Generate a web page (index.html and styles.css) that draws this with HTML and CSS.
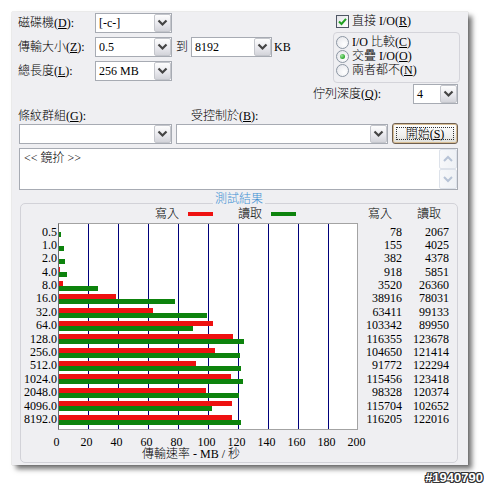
FILE: index.html
```html
<!DOCTYPE html>
<html>
<head>
<meta charset="utf-8">
<link rel="stylesheet" href="styles.css">
</head>
<body>
<div class="win">
  <div class="top">
    <div class="fields">
      <div class="frow">
        <span class="flabel">磁碟機(<u>D</u>):</span>
        <div class="sel w77"><span class="val">[-c-]</span><span class="dd"><svg width="15" height="14" viewBox="0 0 15 14"><path d="M3.5 4.5 L7.5 8.5 L11.5 4.5" fill="none" stroke="#444" stroke-width="2.2"/></svg></span></div>
      </div>
      <div class="frow">
        <span class="flabel">傳輸大小(<u>Z</u>):</span>
        <div class="sel w77"><span class="val">0.5</span><span class="dd"><svg width="15" height="14" viewBox="0 0 15 14"><path d="M3.5 4.5 L7.5 8.5 L11.5 4.5" fill="none" stroke="#444" stroke-width="2.2"/></svg></span></div>
        <span class="to">到</span>
        <div class="sel w81"><span class="val">8192</span><span class="dd"><svg width="15" height="14" viewBox="0 0 15 14"><path d="M3.5 4.5 L7.5 8.5 L11.5 4.5" fill="none" stroke="#444" stroke-width="2.2"/></svg></span></div>
        <span class="kb">KB</span>
      </div>
      <div class="frow">
        <span class="flabel">總長度(<u>L</u>):</span>
        <div class="sel w77"><span class="val">256 MB</span><span class="dd"><svg width="15" height="14" viewBox="0 0 15 14"><path d="M3.5 4.5 L7.5 8.5 L11.5 4.5" fill="none" stroke="#444" stroke-width="2.2"/></svg></span></div>
      </div>
    </div>
    <div class="opts">
      <div class="chkrow">
        <span class="chk"><svg width="11" height="11" viewBox="0 0 11 11"><path d="M2 5.5 L4.5 8 L9 2.8" fill="none" stroke="#21a121" stroke-width="2"/></svg></span>
        <span class="otext">直接 I/O(<u>R</u>)</span>
      </div>
      <div class="rbox">
        <div class="rrow"><span class="radio"></span><span class="otext">I/O 比較(<u>C</u>)</span></div>
        <div class="rrow"><span class="radio on"><span class="dot"></span></span><span class="otext">交疊 I/O(<u>O</u>)</span></div>
        <div class="rrow"><span class="radio"></span><span class="otext">兩者都不(<u>N</u>)</span></div>
      </div>
    </div>
  </div>
  <div class="qrow">
    <span class="qlabel">佇列深度(<u>Q</u>):</span>
    <div class="sel w45"><span class="val">4</span><span class="dd"><svg width="15" height="14" viewBox="0 0 15 14"><path d="M3.5 4.5 L7.5 8.5 L11.5 4.5" fill="none" stroke="#444" stroke-width="2.2"/></svg></span></div>
  </div>
  <div class="lrow">
    <span class="l1">條紋群組(<u>G</u>):</span>
    <span class="l2">受控制於(<u>B</u>):</span>
  </div>
  <div class="crow">
    <div class="sel combo w153"><span class="val"></span><span class="dd"><svg width="15" height="14" viewBox="0 0 15 14"><path d="M3.5 4.5 L7.5 8.5 L11.5 4.5" fill="none" stroke="#444" stroke-width="2.2"/></svg></span></div>
    <div class="sel combo w212"><span class="val"></span><span class="dd"><svg width="15" height="14" viewBox="0 0 15 14"><path d="M3.5 4.5 L7.5 8.5 L11.5 4.5" fill="none" stroke="#444" stroke-width="2.2"/></svg></span></div>
    <div class="btn"><span class="focus">開始(<u>S</u>)</span></div>
  </div>
  <div class="memo">
    <div class="mtext">&lt;&lt; 鏡扴 &gt;&gt;</div>
    <div class="sb">
      <span class="sbb"><svg width="12" height="10" viewBox="0 0 12 10"><path d="M2 7 L6 3 L10 7" fill="none" stroke="#b7c3d6" stroke-width="2"/></svg></span>
      <span class="sbb"><svg width="12" height="10" viewBox="0 0 12 10"><path d="M2 3 L6 7 L10 3" fill="none" stroke="#b7c3d6" stroke-width="2"/></svg></span>
    </div>
  </div>
  <div class="group">
    <div class="gtitle">測試結果</div>
    <div class="legend">
      <span class="lg1">寫入</span><span class="lw"></span>
      <span class="lg2">讀取</span><span class="lr"></span>
      <span class="lg3">寫入</span>
      <span class="lg4">讀取</span>
    </div>
    <div class="chart">
      <div class="ylab">
        <div class="r">0.5</div><div class="r">1.0</div><div class="r">2.0</div><div class="r">4.0</div><div class="r">8.0</div>
        <div class="r">16.0</div><div class="r">32.0</div><div class="r">64.0</div><div class="r">128.0</div><div class="r">256.0</div>
        <div class="r">512.0</div><div class="r">1024.0</div><div class="r">2048.0</div><div class="r">4096.0</div><div class="r">8192.0</div>
      </div>
      <div class="plot">
        <div class="br"><span class="bw" style="width:0px"></span><span class="brd" style="width:2.1px"></span></div>
        <div class="br"><span class="bw" style="width:0px"></span><span class="brd" style="width:5px"></span></div>
        <div class="br"><span class="bw" style="width:0px"></span><span class="brd" style="width:5.6px"></span></div>
        <div class="br"><span class="bw" style="width:0.4px"></span><span class="brd" style="width:7.8px"></span></div>
        <div class="br"><span class="bw" style="width:4.3px"></span><span class="brd" style="width:38.5px"></span></div>
        <div class="br"><span class="bw" style="width:57.4px"></span><span class="brd" style="width:116px"></span></div>
        <div class="br"><span class="bw" style="width:94.1px"></span><span class="brd" style="width:147.7px"></span></div>
        <div class="br"><span class="bw" style="width:154px"></span><span class="brd" style="width:133.9px"></span></div>
        <div class="br"><span class="bw" style="width:173.5px"></span><span class="brd" style="width:184.5px"></span></div>
        <div class="br"><span class="bw" style="width:156px"></span><span class="brd" style="width:181.1px"></span></div>
        <div class="br"><span class="bw" style="width:136.7px"></span><span class="brd" style="width:182.4px"></span></div>
        <div class="br"><span class="bw" style="width:172.2px"></span><span class="brd" style="width:184.1px"></span></div>
        <div class="br"><span class="bw" style="width:146.5px"></span><span class="brd" style="width:179.6px"></span></div>
        <div class="br"><span class="bw" style="width:172.6px"></span><span class="brd" style="width:153px"></span></div>
        <div class="br"><span class="bw" style="width:173.3px"></span><span class="brd" style="width:182px"></span></div>
      </div>
      <div class="vcol c1">
        <div class="r">78</div><div class="r">155</div><div class="r">382</div><div class="r">918</div><div class="r">3520</div>
        <div class="r">38916</div><div class="r">63411</div><div class="r">103342</div><div class="r">116355</div><div class="r">104650</div>
        <div class="r">91772</div><div class="r">115456</div><div class="r">98328</div><div class="r">115704</div><div class="r">116205</div>
      </div>
      <div class="vcol c2">
        <div class="r">2067</div><div class="r">4025</div><div class="r">4378</div><div class="r">5851</div><div class="r">26360</div>
        <div class="r">78031</div><div class="r">99133</div><div class="r">89950</div><div class="r">123678</div><div class="r">121414</div>
        <div class="r">122294</div><div class="r">123418</div><div class="r">120374</div><div class="r">102652</div><div class="r">122016</div>
      </div>
    </div>
    <div class="xlab">
      <span>0</span><span>20</span><span>40</span><span>60</span><span>80</span><span>100</span><span>120</span><span>140</span><span>160</span><span>180</span><span>200</span>
    </div>
    <div class="xtitle">傳輸速率 - MB / 秒</div>
  </div>
</div>
<div class="wm">#1940790</div>
</body>
</html>
```

FILE: styles.css
```css
* { box-sizing: border-box; }
html, body { margin: 0; padding: 0; background: #fff; }
body {
  width: 488px; height: 486px; overflow: hidden;
  font-family: "Liberation Serif", "Noto Sans CJK TC", serif;
  font-size: 12px; font-weight: 300; color: #000;
}
u { text-decoration: underline; text-underline-offset: 1px; }
.win {
  margin: 12px 0 0 12px; width: 456px; height: 453px;
  background: #efeff2; padding: 1px 10px 0 6px;
  box-shadow: 0 0 1px rgba(0,0,0,.35), 4px 4px 5px rgba(0,0,0,.55);
}
.top { display: flex; height: 71px; }
.fields { display: flex; flex-direction: column; gap: 4px; }
.frow { display: flex; align-items: center; height: 20px; }
.flabel { width: 77px; line-height: 14px; white-space: nowrap; }
.to { margin: 0 3px 0 4px; line-height: 14px; }
.kb { margin-left: 2px; line-height: 14px; }

.sel {
  display: flex; height: 20px; background: #fff;
  border: 1px solid #a7abb3;
}
.sel .val { flex: 1; padding-left: 3px; line-height: 18px; white-space: nowrap; overflow: hidden; }
.sel .dd {
  width: 17px; margin: 0; border: 1px solid #c4c6cc; border-radius: 2px;
  background: linear-gradient(#fdfdfd, #e9e9ee 55%, #d3d4da);
  display: flex; align-items: center; justify-content: center;
}
.w77 { width: 77px; }
.w81 { width: 81px; }
.w45 { width: 45px; }
.w153 { width: 153px; }
.w212 { width: 212px; }

.opts { margin-left: auto; margin-right: -2px; width: 127px; }
.chkrow { display: flex; align-items: center; height: 16px; }
.chk {
  width: 13px; height: 13px; margin-left: 3px;
  border: 1px solid #4f5664; background: linear-gradient(135deg, #e4e4e8, #fff);
  display: flex; align-items: center; justify-content: center;
}
.otext { margin-left: 3px; line-height: 14px; white-space: nowrap; }
.rbox {
  margin-top: 3px; height: 51px; border: 1px solid #d4d4da; border-radius: 4px;
  padding: 2px 0 0 2px;
}
.rrow { display: flex; align-items: center; height: 14px; }
.radio {
  width: 13px; height: 13px; border-radius: 50%;
  border: 1px solid #8c96a3; background: radial-gradient(circle at 65% 65%, #fff, #e2e3e8);
  display: flex; align-items: center; justify-content: center;
}
.radio .dot {
  width: 5px; height: 5px; border-radius: 50%;
  background: radial-gradient(circle at 35% 35%, #9be79b, #2da62d 70%);
}

.qrow { display: flex; justify-content: flex-end; align-items: center; height: 20px; }
.qlabel { width: 100px; line-height: 14px; white-space: nowrap; }

.lrow { display: flex; margin-top: 5px; line-height: 14px; }
.l1 { width: 173px; }

.crow { display: flex; align-items: flex-start; height: 21px; gap: 4px; }
.combo { margin-top: 1px; }
.crow .combo:first-child { margin-left: 1px; }
.btn {
  width: 66px; height: 21px; border: 1px solid #6e5f50; border-radius: 3px;
  background: linear-gradient(#ffffff, #f0f0ee 60%, #deded8);
  box-shadow: inset 0 0 0 1px #d9bf96;
  padding: 3px;
}
.btn .focus {
  display: block; height: 100%; border: 1px dotted #333;
  text-align: center; line-height: 12px;
}

.memo {
  display: flex; margin: 4px 0 0 1px; width: 439px; height: 42px;
  background: #fff; border: 1px solid #a7abb3;
}
.mtext { flex: 1; padding: 2px 4px; line-height: 14px; }
.sb { width: 18px; display: flex; flex-direction: column; }
.sbb {
  height: 20px; border: 1px solid #dde2ea; border-radius: 2px;
  background: linear-gradient(90deg, #f7f8fa, #eef1f5);
  display: flex; align-items: center; justify-content: center;
}

.group {
  margin: 13px 0 0 2px; width: 438px; height: 260px;
  border: 1px solid #d2d2d8; border-radius: 5px;
}
.gtitle {
  margin: -12px auto 0; width: fit-content; padding: 0 2px;
  background: #efeff2; color: #3f8fd2; line-height: 14px;
}
.legend { display: flex; align-items: center; margin-top: 1px; height: 14px; line-height: 14px; }
.lg1 { margin-left: 134px; }
.lw { display: block; width: 25px; height: 4px; margin-left: 9px; background: #ee1111; }
.lg2 { margin-left: 25px; }
.lr { display: block; width: 25px; height: 4px; margin-left: 9px; background: #0d830d; }
.lg3 { margin-left: 72px; }
.lg4 { margin-left: 25px; }

.chart { display: flex; margin-top: 2px; }
.r { height: 13.4px; line-height: 13.4px; white-space: nowrap; }
.ylab { width: 37px; padding: 2.5px 1px 0 0; text-align: right; }
.plot {
  width: 300px; height: 207px; padding-top: 1.5px;
  border: 1px solid #a3a3a3; border-left-color: #6d6d6d;
  background-color: #fff;
  background-image: repeating-linear-gradient(to right, transparent 0 29px, #00007a 29px 30px);
}
.br { height: 13.4px; display: flex; flex-direction: column; justify-content: center; }
.bw { display: block; height: 5px; background: #ee1111; }
.brd { display: block; height: 5px; background: #0d830d; }
.vcol { padding-top: 2.5px; text-align: right; }
.c1 { width: 44px; }
.c2 { width: 47px; }

.xlab { display: flex; margin: 6px 0 0 20.5px; line-height: 12px; }
.xlab span { width: 30px; text-align: center; }
.xtitle { margin: 0 0 0 121px; line-height: 12px; white-space: nowrap; }

.wm {
  margin-top: 6px; padding-right: 5px; text-align: right;
  font: bold 13px/14px "Liberation Sans", sans-serif; color: #fff;
  text-shadow: 1px 0 #333, -1px 0 #333, 0 1px #333, 0 -1px #333,
    1px 1px #333, -1px -1px #333, 1px -1px #333, -1px 1px #333;
}
```
